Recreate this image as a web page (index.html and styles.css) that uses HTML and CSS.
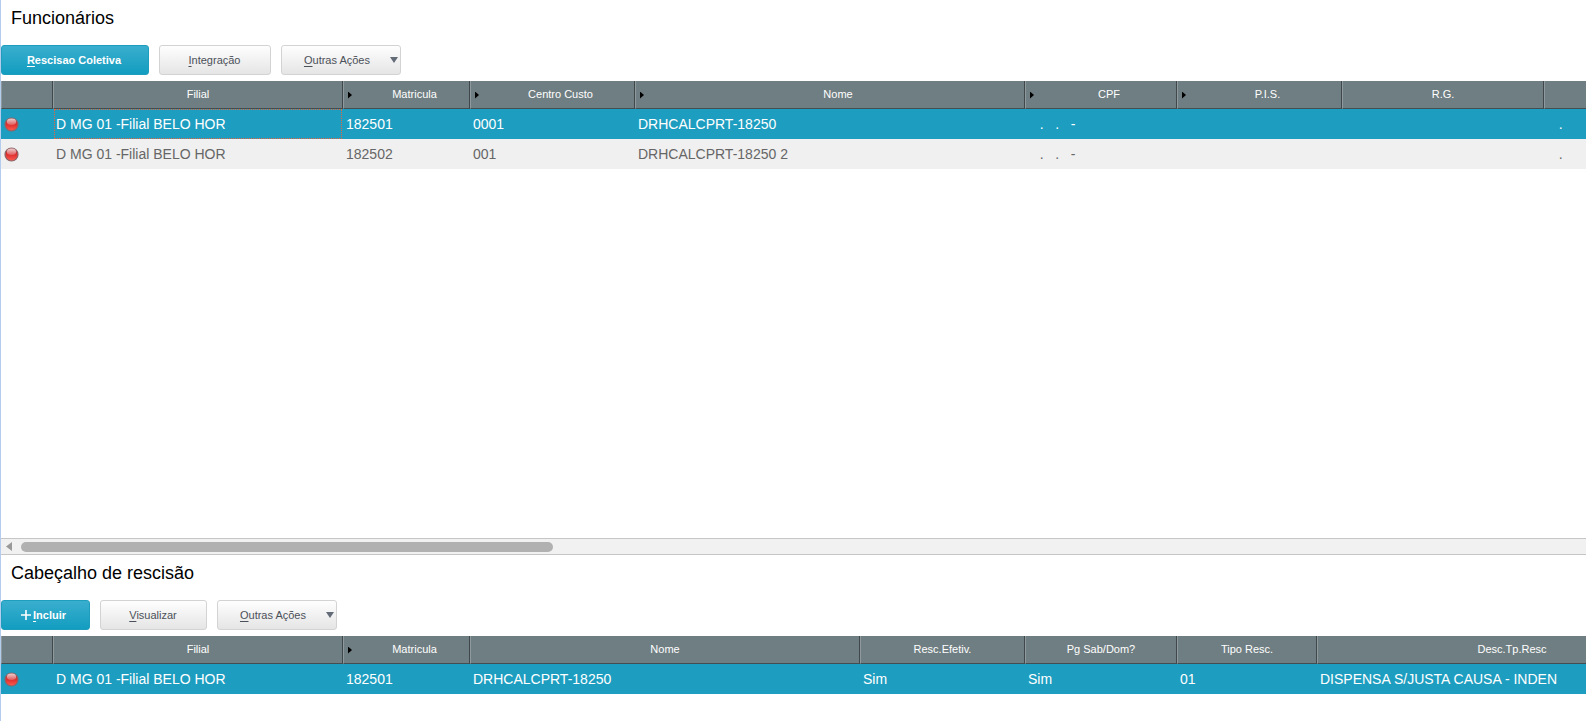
FILE: index.html
```html
<!DOCTYPE html>
<html lang="pt-BR">
<head>
<meta charset="utf-8">
<title>Funcionários</title>
<link rel="stylesheet" href="styles.css">
</head>
<body>
<svg class="defs" width="0" height="0" aria-hidden="true">
  <defs>
    <linearGradient id="ball" x1="0" y1="0" x2="0" y2="1">
      <stop offset="0" stop-color="#c23434"/>
      <stop offset="0.5" stop-color="#dd3030"/>
      <stop offset="1" stop-color="#ff5c50"/>
    </linearGradient>
    <linearGradient id="shine" x1="0" y1="0" x2="0" y2="1">
      <stop offset="0" stop-color="#fff" stop-opacity="0.75"/>
      <stop offset="1" stop-color="#fff" stop-opacity="0.2"/>
    </linearGradient>
    <symbol id="status" viewBox="0 0 15 15">
      <circle cx="7.5" cy="7.5" r="6.5" fill="url(#ball)" stroke="#8a6468" stroke-width="1.2"/>
      <ellipse cx="7.5" cy="4.8" rx="4.6" ry="3.2" fill="url(#shine)"/>
    </symbol>
  </defs>
</svg>
<main class="screen">
  <section class="panel panel-top">
    <h1 class="title">Funcionários</h1>
    <div class="toolbar">
      <button class="btn primary w-coletiva"><span><u>R</u>escisao Coletiva</span></button>
      <button class="btn w-integracao"><span><u>I</u>ntegração</span></button>
      <button class="btn menu"><span><u>O</u>utras Ações</span><svg class="caret" viewBox="0 0 8 6"><path d="M0 0h8L4 6z"/></svg></button>
    </div>
    <div class="grid employees">
      <div class="head"></div>
      <div class="head">Filial</div>
      <div class="head sort">Matricula</div>
      <div class="head sort">Centro Custo</div>
      <div class="head sort">Nome</div>
      <div class="head sort">CPF</div>
      <div class="head sort">P.I.S.</div>
      <div class="head">R.G.</div>
      <div class="head"></div>

      <div class="cell on"><svg class="dot"><use href="#status"/></svg></div>
      <div class="cell on focus">D MG 01 -Filial BELO HOR</div>
      <div class="cell on">182501</div>
      <div class="cell on">0001</div>
      <div class="cell on">DRHCALCPRT-18250</div>
      <div class="cell on">   .   .   -</div>
      <div class="cell on"></div>
      <div class="cell on"></div>
      <div class="cell on">   .</div>

      <div class="cell"><svg class="dot"><use href="#status"/></svg></div>
      <div class="cell">D MG 01 -Filial BELO HOR</div>
      <div class="cell">182502</div>
      <div class="cell">001</div>
      <div class="cell">DRHCALCPRT-18250 2</div>
      <div class="cell">   .   .   -</div>
      <div class="cell"></div>
      <div class="cell"></div>
      <div class="cell">   .</div>
    </div>
    <div class="scrollbar">
      <svg class="back" viewBox="0 0 6 9"><path d="M6 0v9L0 4.5z"/></svg>
      <div class="thumb"></div>
    </div>
  </section>

  <section class="panel">
    <h2 class="title">Cabeçalho de rescisão</h2>
    <div class="toolbar">
      <button class="btn primary w-incluir"><svg class="plus" viewBox="0 0 10 10"><path d="M4.2 0h1.6v4.2H10v1.6H5.8V10H4.2V5.8H0V4.2h4.2z"/></svg><span><u>I</u>ncluir</span></button>
      <button class="btn w-visualizar"><span><u>V</u>isualizar</span></button>
      <button class="btn menu"><span><u>O</u>utras Ações</span><svg class="caret" viewBox="0 0 8 6"><path d="M0 0h8L4 6z"/></svg></button>
    </div>
    <div class="grid terminations">
      <div class="head"></div>
      <div class="head">Filial</div>
      <div class="head sort">Matricula</div>
      <div class="head">Nome</div>
      <div class="head">Resc.Efetiv.</div>
      <div class="head">Pg Sab/Dom?</div>
      <div class="head">Tipo Resc.</div>
      <div class="head">Desc.Tp.Resc</div>

      <div class="cell on"><svg class="dot"><use href="#status"/></svg></div>
      <div class="cell on">D MG 01 -Filial BELO HOR</div>
      <div class="cell on">182501</div>
      <div class="cell on">DRHCALCPRT-18250</div>
      <div class="cell on">Sim</div>
      <div class="cell on">Sim</div>
      <div class="cell on">01</div>
      <div class="cell on">DISPENSA S/JUSTA CAUSA - INDEN</div>
    </div>
  </section>
</main>
</body>
</html>
```
FILE: styles.css
```css
* { box-sizing: border-box; }

body {
  margin: 0;
  background: #fff;
  font-family: "Liberation Sans", Arial, sans-serif;
  overflow: hidden;
}

.defs { display: block; }

.screen {
  height: 721px;
  border-left: 1px solid #b4cdee;
  overflow: hidden;
}

.panel { display: flex; flex-direction: column; }
.panel-top { height: 555px; }

.title {
  margin: 0;
  height: 45px;
  padding: 8px 0 0 10px;
  font-size: 18px;
  line-height: 20px;
  font-weight: 400;
  color: #000;
}

.toolbar { display: flex; gap: 10px; height: 36px; }

.btn {
  display: flex;
  align-items: center;
  justify-content: center;
  height: 30px;
  padding: 0;
  border: 1px solid #d3d3d3;
  border-radius: 3px;
  background: linear-gradient(#fefefe, #e5e5e5);
  font: 11px/14px "Liberation Sans", Arial, sans-serif;
  color: #4b5059;
  white-space: nowrap;
}

.btn u {
  text-underline-offset: 2px;
  text-decoration-thickness: 1px;
  text-decoration-skip-ink: none;
}

.btn.primary {
  border-color: #1f9dbd;
  background: linear-gradient(#3aaece, #129dc0);
  color: #fff;
  font-weight: 700;
}

.w-coletiva { width: 148px; padding-right: 2px; }
.w-integracao { width: 112px; padding-right: 1px; }
.w-incluir { width: 89px; gap: 2px; padding-right: 4px; }
.w-visualizar { width: 107px; padding-right: 1px; }

.menu { width: 120px; justify-content: flex-end; padding-right: 2px; gap: 20px; }
.caret { width: 8px; height: 6px; fill: #636b79; }
.plus { width: 10px; height: 10px; fill: #fff; }

.grid { display: grid; grid-auto-rows: 30px; }
.employees {
  width: 1800px;
  grid-template-columns: 52px 290px 127px 165px 390px 152px 165px 202px 257px;
  grid-template-rows: 28px;
}
.terminations {
  width: 1706px;
  grid-template-columns: 52px 290px 127px 390px 165px 152px 140px 390px;
  grid-template-rows: 28px;
}

.head {
  display: flex;
  align-items: center;
  justify-content: center;
  padding-bottom: 1px;
  border-left: 1px solid #8f9a9e;
  border-right: 1px solid #40484b;
  border-bottom: 1px solid #444d50;
  background: #6f7e82;
  color: #fff;
  font-size: 11px;
  line-height: 14px;
}

.head.sort {
  display: grid;
  grid-template-columns: 16px 1fr;
  text-align: center;
}
.head.sort::before {
  content: "";
  width: 4px;
  height: 7px;
  margin: 2px 0 0 4px;
  background: #000;
  clip-path: polygon(0 0, 100% 50%, 0 100%);
}

.cell {
  display: flex;
  align-items: center;
  padding: 0 0 0 3px;
  background: #f0f0f0;
  color: #666;
  font-size: 14px;
  line-height: 18px;
  white-space: pre;
}
.cell.on { background: #1d9dbf; color: #fff; }
.cell.focus {
  outline: 1px dotted #e0673f;
  outline-offset: -1px;
  margin: 0 1px;
  padding-left: 2px;
  box-shadow: 1px 0 #1d9dbf, -1px 0 #1d9dbf;
}

.dot { width: 15px; height: 15px; }

.scrollbar {
  display: flex;
  align-items: center;
  gap: 9px;
  height: 17px;
  margin-top: auto;
  padding-left: 5px;
  border-top: 1px solid #c6c6c6;
  border-bottom: 1px solid #c6c6c6;
  background: #f1f1f1;
}
.back { width: 6px; height: 9px; fill: #999; }
.thumb { width: 532px; height: 10px; border-radius: 5px; background: #b1b1b1; }
```
